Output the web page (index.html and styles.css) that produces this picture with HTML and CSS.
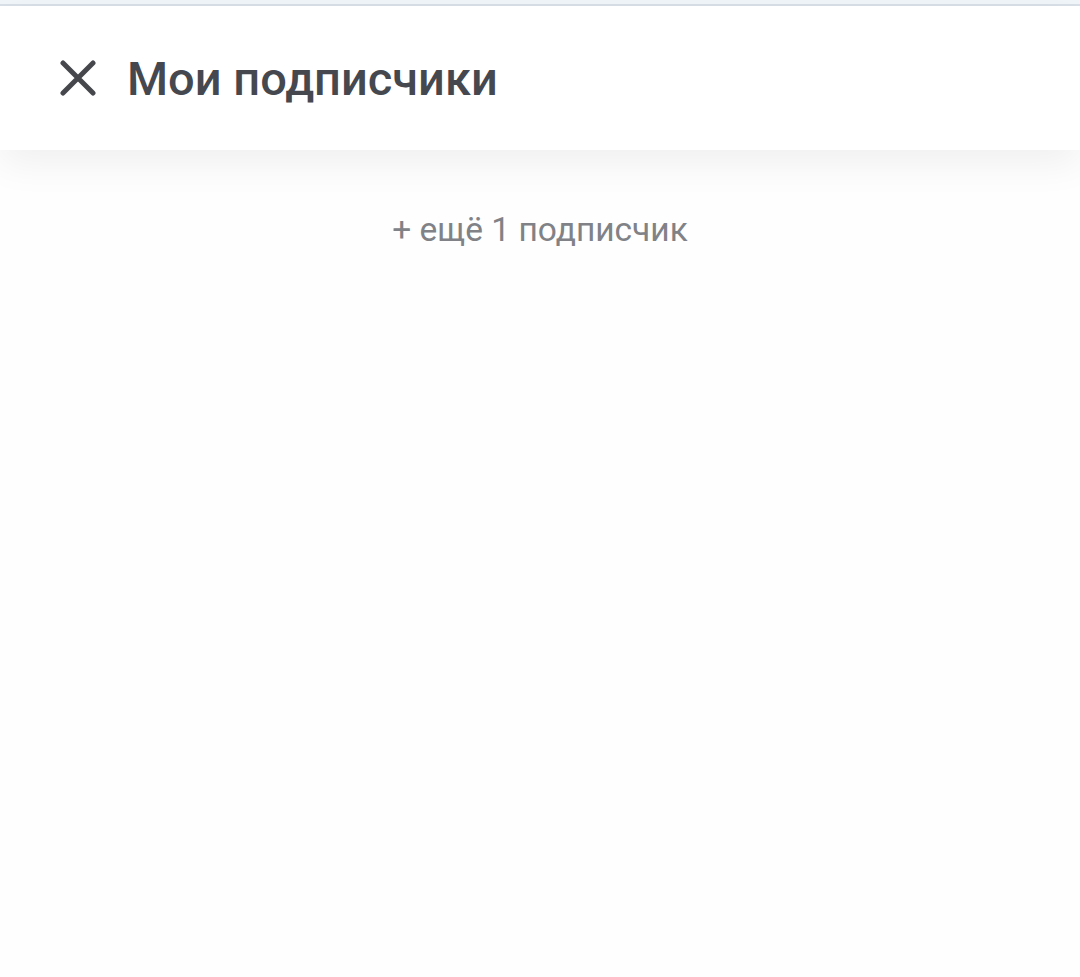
FILE: index.html
```html
<!DOCTYPE html>
<html lang="ru">
<head>
    <meta charset="UTF-8">
    <meta name="viewport" content="width=device-width, initial-scale=1.0">
    <title>Мои подписчики</title>
    <link rel="stylesheet" href="styles.css">
</head>
<body>
    <div class="top-strip"></div>
    <header class="header">
        <button class="close-btn" aria-label="Закрыть">
            <svg width="36" height="36" viewBox="0 0 36 36">
                <path d="M3 3 L33 33 M33 3 L3 33" stroke="#45474d" stroke-width="5" stroke-linecap="round" fill="none"/>
            </svg>
        </button>
        <h1 class="title">Мои подписчики</h1>
    </header>
    <main class="content">
        <div class="more">+ ещё 1 подписчик</div>
    </main>
</body>
</html>
```

FILE: styles.css
```css
body {
    margin: 0;
    background: #fefefe;
    font-family: Roboto, "Noto Sans", sans-serif;
    min-height: 100vh;
}

.top-strip {
    height: 4px;
    background: #f0f5fa;
    border-bottom: 2px solid #d8dfe6;
}

.header {
    height: 144px;
    display: flex;
    align-items: center;
    padding-left: 60px;
    background: #ffffff;
    box-shadow: 0 14px 36px rgba(0,0,0,0.06);
    position: relative;
}

.close-btn {
    border: none;
    background: none;
    padding: 0;
    width: 36px;
    height: 36px;
    margin-right: 31px;
    cursor: pointer;
    display: flex;
}

.title {
    margin: 0;
    font-size: 47px;
    font-weight: 500;
    color: #45484e;
}

.content {
    padding-top: 60px;
    text-align: center;
}

.more {
    font-size: 33.5px;
    color: #808287;
}
```
